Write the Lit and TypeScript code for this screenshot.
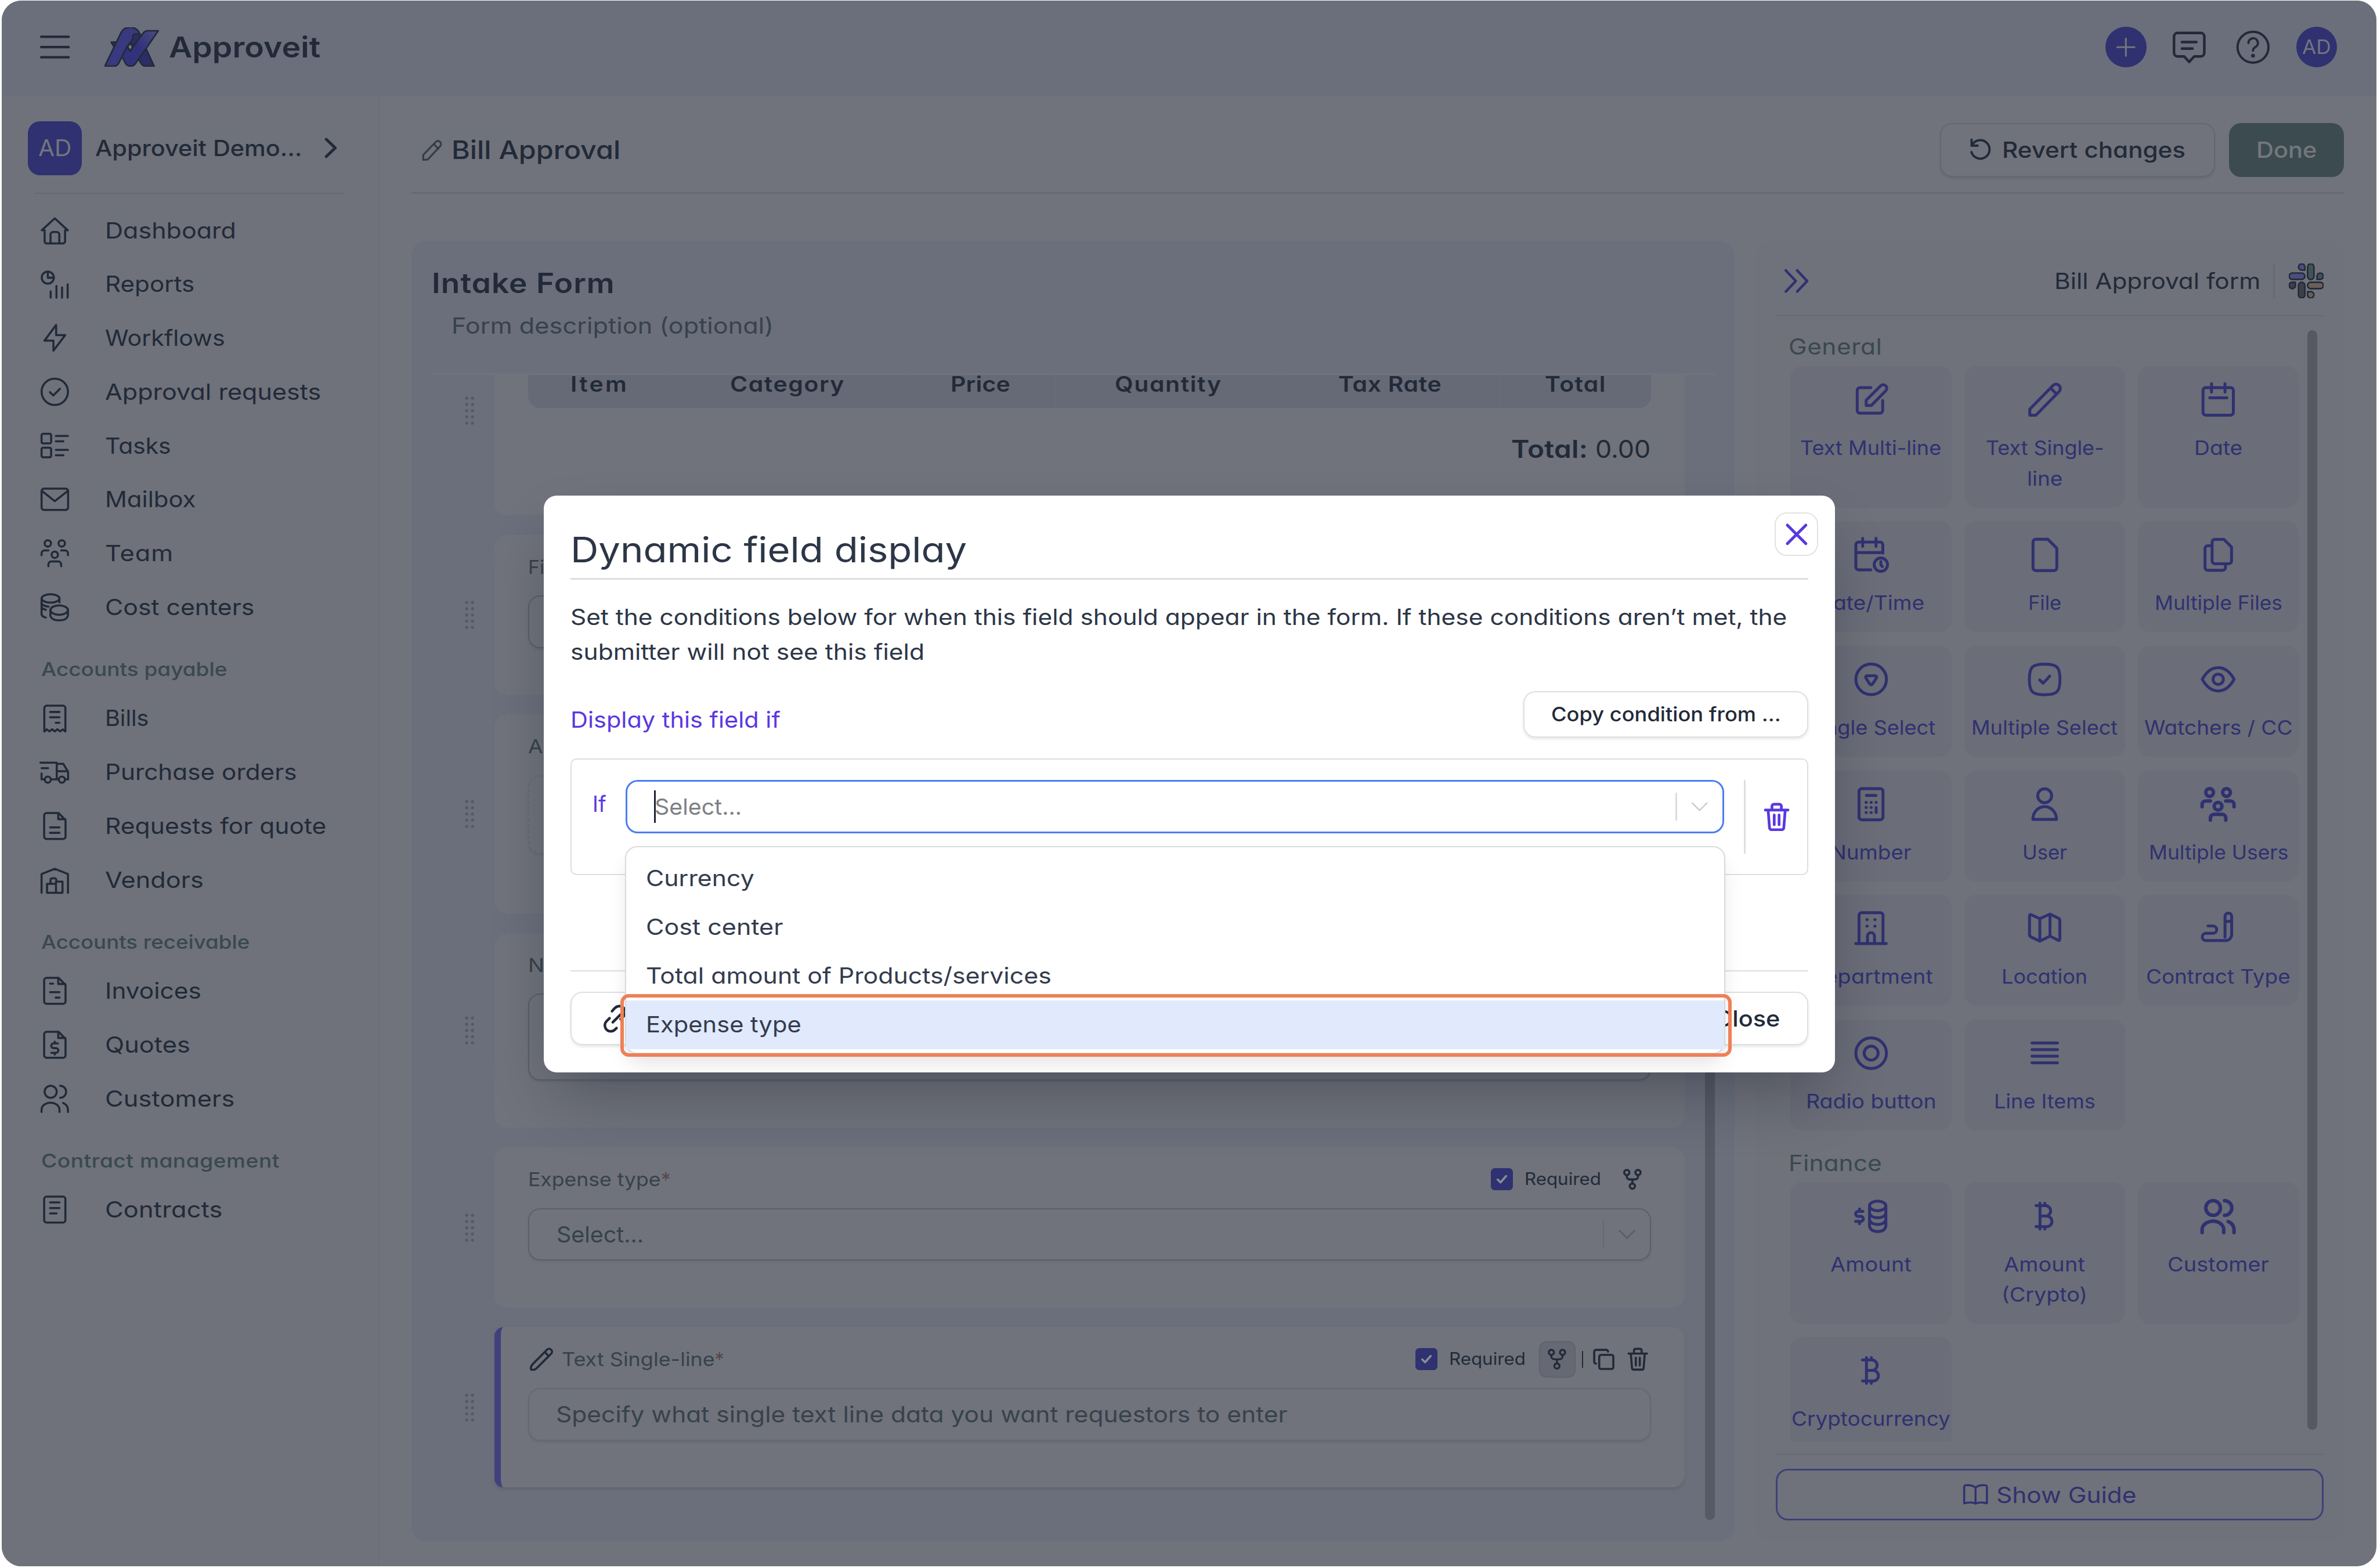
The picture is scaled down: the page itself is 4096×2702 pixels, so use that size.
import { LitElement, html, css, svg, nothing } from "lit";
import { customElement } from "lit/decorators.js";

const DESIGN_WIDTH = 1568;
const MAX_STRETCH = 1.12;

type Label = [text: string, width: number];

/** Text whose width and tracking are tuned so the words span the given width. */
const t = ([text, width]: Label, cls = "") =>
  html`<span class="t ${cls}" data-w=${width}>${text}</span>`;

const people = svg`<circle cx="5.5" cy="3.6" r="2.1"/><circle cx="14.7" cy="3.6" r="2.1"/><circle cx="10.1" cy="11.1" r="2.1"/><path d="M1.4 11.4V10.2a2 2 0 0 1 2-2h2.5M18.8 11.4V10.2a2 2 0 0 0-2-2h-2.5M5.9 18.7v-1.2a2 2 0 0 1 2-2h4.4a2 2 0 0 1 2 2v1.2"/>`;
const couple = svg`<circle cx="7.4" cy="5.5" r="4"/><path d="M1.4 18.9v-1.6a5.9 4.6 0 0 1 11.8 0v1.6M13.6 1.5a4 4 0 0 1 0 8M15.6 12.9q3.2 1.3 3.2 4.6v1.4"/>`;
const doc = svg`<path d="M3.1 3.1a1.6 1.6 0 0 1 1.6-1.6h7.9l4.6 4.7v10.9a1.6 1.6 0 0 1-1.6 1.6H4.7a1.6 1.6 0 0 1-1.6-1.6zM12.4 1.6v4h4.6"/>`;

const navIcons: Record<string, unknown> = {
  home: svg`<path d="M3.4 9.9H1.5L10.1 2l8.6 7.9h-1.8v7.2a1.5 1.5 0 0 1-1.5 1.5H4.9a1.5 1.5 0 0 1-1.5-1.5zM7.3 18.5v-5.7a1.8 1.8 0 0 1 1.8-1.8h2.2a1.8 1.8 0 0 1 1.8 1.8v5.7"/>`,
  reports: svg`<circle cx="5.5" cy="5.5" r="4"/><path d="M5.5 1.6v4h4M7.4 14.6v4.2M11.2 11v7.8M14.9 12v6.8M18.6 10v8.8"/>`,
  bolt: svg`<path d="M11 1.5L3.3 11.9h5.9v6.6L17 8.2h-6z"/>`,
  check: svg`<circle cx="10.1" cy="10" r="8.7"/><path d="M6.9 10.2l2.2 2.2 4.4-4.4"/>`,
  tasks: svg`<rect x="1.4" y="2.1" width="6.3" height="6.3" rx="1"/><rect x="1.4" y="11.3" width="6.3" height="6.3" rx="1"/><path d="M10.8 3.5h8M10.8 7.1h5M10.8 12.7h8M10.8 16.3h5"/>`,
  mail: svg`<rect x="1.4" y="3.1" width="17.5" height="14" rx="1.6"/><path d="M1.7 4.6l8.4 6.7 8.5-6.7"/>`,
  team: people,
  coins: svg`<ellipse cx="7.3" cy="4.3" rx="5.9" ry="2.8"/><path d="M1.4 4.3v10.6q.4 1.4 2.8 2M1.4 10q.4 1.2 2.8 1.8M13.2 4.3v2.6M1.4 7.5q1 2 4.6 2.2"/><ellipse cx="13" cy="12" rx="5.8" ry="3.1"/><path d="M7.2 12v3.8q1 3 5.8 3t5.8-3V12"/>`,
  bills: svg`<path d="M3.2 18.6V3.1a1.6 1.6 0 0 1 1.6-1.6h10.7a1.6 1.6 0 0 1 1.6 1.6v15.5l-1.7-1.4-1.8 1.3-1.8-1.4-1.7 1.4-1.7-1.4-1.8 1.4-1.8-1.3zM7 5.7h6.2M7 9.2h6.2M10.7 12.8h2.5"/>`,
  truck: svg`<path d="M.6 3.9h10.8v11M1.4 7.6h4.3M1.4 11v3.9h2M7.6 14.9h5M11.4 4.7h4.3l3.2 5.2v5h-2M11.4 9.6h7.3"/><circle cx="5.5" cy="15.1" r="2"/><circle cx="14.8" cy="15.1" r="2"/>`,
  request: svg`${doc}<path d="M7 11h6.2M7 14.6h6.2"/>`,
  vendor: svg`<path d="M1.4 18.6V6.2l8.7-3.5 8.7 3.5v12.4M5 12.6h5.9v6H5zM10.9 11.2h4.3v7.4h-4.3zM7.3 12.5V10a1 1 0 0 1 1-1h1.8a1 1 0 0 1 1 1v1.2"/>`,
  invoice: svg`${doc}<path d="M7 5.4h2M7 11h6.2M10.7 14.6h2.5"/>`,
  quote: svg`${doc}<path d="M12.2 9.2H9.3a1.5 1.5 0 0 0 0 3.1h1.6a1.5 1.5 0 0 1 0 3.1H7.8M10.1 8v1.2M10.1 15.4v1.2"/>`,
  customers: couple,
  contract: svg`<rect x="3.1" y="1.5" width="14" height="17.2" rx="1.6"/><path d="M7 5.4h6.2M7 9.1h6.2M7 12.6h4.3"/>`,
};

const btc = svg`<path d="M6.3 4.8h6.2a3.3 3.3 0 0 1 0 6.9H8.9M8.9 11.7h4.4a3.5 3.5 0 0 1 0 7H6.3M8.9 4.8v13.9M8.9 3.2v1.6M12.1 3.2v1.6M8.9 18.7v1.6M12.1 18.7v1.6"/>`;

const tileIcons: Record<string, unknown> = {
  edit: svg`<path d="M11.8 3.8H4.6A1.8 1.8 0 0 0 2.8 5.6v13.3a1.8 1.8 0 0 0 1.8 1.8h13.2a1.8 1.8 0 0 0 1.8-1.8v-6.6"/><path d="M8.7 15.6v-3.4L18.3 2.6a2.3 2.3 0 0 1 3.3 3.3l-9.5 9.7z"/>`,
  pencil: svg`<path d="M2.2 22v-4L17.5 2.4a2.8 2.8 0 0 1 4 4L6.2 22zM16 4.2l3.9 3.9"/>`,
  date: svg`<rect x="2" y="3.8" width="20" height="18.2" rx="1.8"/><path d="M7.6 1.2v5.6M16.5 1.2v5.6M6.4 10.5h11.4"/>`,
  datetime: svg`<path d="M11.8 21.8H3.7a1.8 1.8 0 0 1-1.8-1.8V5.3a1.8 1.8 0 0 1 1.8-1.8h14.2a1.8 1.8 0 0 1 1.8 1.8v5.5M1.9 10.4h17.8M6.4 1v5.4M15.2 1v5.4"/><circle cx="18.4" cy="18.4" r="4.4"/><path d="M18.4 16.4v2.2l1 1"/>`,
  file: svg`<path d="M4.3 3.4A1.8 1.8 0 0 1 6.1 1.6h8l5.9 6v12.9a1.8 1.8 0 0 1-1.8 1.8H6.1a1.8 1.8 0 0 1-1.8-1.8z"/>`,
  files: svg`<path d="M8 3.5a1.8 1.8 0 0 1 1.8-1.8h6l5 5.1V16a1.8 1.8 0 0 1-1.8 1.8H9.8A1.8 1.8 0 0 1 8 16zM7.8 5.9H5.1a1.8 1.8 0 0 0-1.8 1.8v12.6a1.8 1.8 0 0 0 1.8 1.8h9.9a1.8 1.8 0 0 0 1.8-1.8v-2"/>`,
  single: svg`<circle cx="12" cy="11.7" r="10.1"/><path d="M9.4 9.4h5.2q1.6.2.8 1.6l-2.5 3.8q-.9 1.1-1.8 0L8.6 11q-.8-1.4.8-1.6z"/>`,
  multi: svg`<path d="M12 1.7c8.2 0 10.1 1.9 10.1 10.1S20.200 21.900 12 21.900 1.900 20 1.900 11.800 3.800 1.700 12 1.700z"/><path d="M8.7 12.1l2.300 2.200 4.300-4.700"/>`,
  eye: svg`<path d="M1.500 11.700Q5.700 4 12 4t10.500 7.700Q18.300 19.400 12 19.400T1.500 11.700z"/><circle cx="12" cy="11.700" r="3.400"/>`,
  calc: svg`<rect x="4" y="1.500" width="15.800" height="20.600" rx="1.800"/><path d="M8.800 6h6.400M8.600 10.600h.2M11.900 10.600h.2M15.200 10.600h.2M8.600 14h.2M11.900 14h.2M8.600 17.300h.2M11.900 17.300h.2M15.300 14v3.300"/>`,
  user: svg`<circle cx="12" cy="6.200" r="4.600"/><path d="M4.200 21.800a7.800 8.400 0 0 1 15.600 0z"/>`,
  users: svg`<g transform="translate(-.3 -.3) scale(1.210)">${people}</g>`,
  building: svg`<path d="M4 21.700V3.200A1.800 1.800 0 0 1 5.800 1.400h12.200a1.800 1.800 0 0 1 1.800 1.800v18.500M1.800 21.800h20.200M9.600 21.500v-4.600a2.300 2.300 0 0 1 4.600 0v4.600M9.200 6h.2M14.400 6h.2M9.200 10.300h.2M14.400 10.300h.2"/>`,
  map: svg`<path d="M2 3.600q0-1.300 1.200-.7l5.600 2.500 6.700-3 5.400 2.600q1.100.5 1.100 1.700v12.200q0 1.200-1.100.7l-5.400-2.700-6.700 3.300-5.700-2.700Q2 17 2 15.800zM8.800 5.400v14.800M15.500 2.400v14.500"/>`,
  sign: svg`<path d="M16.500 17.600V3.900a2.200 2.200 0 0 1 4.400 0v11.900a4 4 0 0 1-4 4H3.900a2.200 2.200 0 0 1 0-4.800h4.700a2.400 2.400 0 0 0 0-4.800H5.300M16.600 7.200h4.200"/>`,
  radio: svg`<circle cx="12" cy="11.800" r="10.100"/><circle cx="12" cy="11.800" r="4.600"/>`,
  lines: svg`<path d="M3.600 5.100h16.900M3.600 9.500h16.900M3.600 13.800h16.900M3.600 18.200h16.900"/>`,
  amount: svg`<ellipse cx="16.300" cy="5" rx="5.400" ry="3.200"/><path d="M10.900 5v13.400q.9 3.500 5.400 3.500t5.400-3.500V5M10.900 9.800q.9 3 5.400 3t5.400-3M10.900 14.200q.9 3 5.400 3t5.400-3"/><path d="M6.600 8.600H3.400a1.600 1.600 0 0 0 0 3.300h1.800a1.600 1.600 0 0 1 0 3.300H1.700M4.300 7v1.600M4.300 15.200v1.600"/>`,
  btc,
  customer: svg`<g transform="translate(-.3 -.3) scale(1.210)">${couple}</g>`,
};

interface NavItem { icon: string; label: Label }
interface NavGroup { title?: Label; items: NavItem[] }

const nav: NavGroup[] = [
  { items: [
    { icon: "home", label: ["Dashboard", 85] },
    { icon: "reports", label: ["Reports", 57.6] },
    { icon: "bolt", label: ["Workflows", 77.6] },
    { icon: "check", label: ["Approval requests", 141] },
    { icon: "tasks", label: ["Tasks", 42] },
    { icon: "mail", label: ["Mailbox", 58.4] },
    { icon: "team", label: ["Team", 43.4] },
    { icon: "coins", label: ["Cost centers", 97] },
  ] },
  { title: ["Accounts payable", 121.2], items: [
    { icon: "bills", label: ["Bills", 27.4] },
    { icon: "truck", label: ["Purchase orders", 125] },
    { icon: "request", label: ["Requests for quote", 144.5] },
    { icon: "vendor", label: ["Vendors", 63.5] },
  ] },
  { title: ["Accounts receivable", 136], items: [
    { icon: "invoice", label: ["Invoices", 62] },
    { icon: "quote", label: ["Quotes", 54.7] },
    { icon: "customers", label: ["Customers", 84] },
  ] },
  { title: ["Contract management", 155.6], items: [
    { icon: "contract", label: ["Contracts", 76] },
  ] },
];

interface Tile { icon: string; lines: Label[] }

const general: Tile[] = [
  { icon: "edit", lines: [["Text Multi-line", 91.6]] },
  { icon: "pencil", lines: [["Text Single-", 76.4], ["line", 22]] },
  { icon: "date", lines: [["Date", 30.4]] },
  { icon: "datetime", lines: [["Date/Time", 69]] },
  { icon: "file", lines: [["File", 20.4]] },
  { icon: "files", lines: [["Multiple Files", 82.7]] },
  { icon: "single", lines: [["Single Select", 83.5]] },
  { icon: "multi", lines: [["Multiple Select", 95]] },
  { icon: "eye", lines: [["Watchers / CC", 96.3]] },
  { icon: "calc", lines: [["Number", 52]] },
  { icon: "user", lines: [["User", 28]] },
  { icon: "users", lines: [["Multiple Users", 90.5]] },
  { icon: "building", lines: [["Department", 80.4]] },
  { icon: "map", lines: [["Location", 55.2]] },
  { icon: "sign", lines: [["Contract Type", 93.7]] },
  { icon: "radio", lines: [["Radio button", 84.5]] },
  { icon: "lines", lines: [["Line Items", 65.4]] },
];
const finance: Tile[] = [
  { icon: "amount", lines: [["Amount", 52]] },
  { icon: "btc", lines: [["Amount", 52], ["(Crypto)", 55.2]] },
  { icon: "customer", lines: [["Customer", 65.4]] },
  { icon: "btc", lines: [["Cryptocurrency", 103.3]] },
];

const columns: Label[] = [
  ["Item", 35.6], ["Category", 73.7], ["Price", 37.8], ["Quantity", 68.6], ["Tax Rate", 66.5], ["Total", 38.5],
];

const options: Label[] = [
  ["Currency", 70], ["Cost center", 89], ["Total amount of Products/services", 266], ["Expense type", 101],
];

const fork = svg`<circle cx="4.300" cy="3.600" r="1.700"/><circle cx="11.700" cy="3.600" r="1.700"/><circle cx="8" cy="12.600" r="1.700"/><path d="M4.300 5.300v.9a2 2 0 0 0 2 2h3.400a2 2 0 0 0 2-2v-.9M8 8.200v2.700"/>`;
const trash = svg`<path d="M3.400 5.300l.9 11.400a1.300 1.300 0 0 0 1.300 1.200h6.800a1.300 1.300 0 0 0 1.300-1.200l.9-11.400M1.500 4.900h15M5.900 4.700V2.300A1.200 1.200 0 0 1 7.100 1.100h3.800a1.200 1.200 0 0 1 1.200 1.200v2.400M7.400 8.200v6.400M10.600 8.200v6.400"/>`;

@customElement("app-root")
export class AppRoot extends LitElement {
  static styles = css`
    :host { display: block; width: 100vw; height: 100vh; overflow: hidden; background: #fff;
      font-family: Inter, "Open Sans", sans-serif; font-feature-settings: "cv11" 1; }
    * { box-sizing: border-box; }
    svg { display: block; fill: none; stroke: currentColor; stroke-linecap: round; stroke-linejoin: round; flex: none; }
    .t { white-space: nowrap; display: inline-block; transform-origin: 0 50%; }
    .stage { zoom: 2.6122449; width: 1568px; height: 1034.36px; position: relative; color: #222a39;
      font-size: 14.8px; line-height: 20px; padding: .5px .3px 1px 1px; overflow: hidden; background: #fff; }
    .frame { height: 100%; border-radius: 13px; overflow: hidden; background: #70737b; display: flex; flex-direction: column; }

    .top { height: 62.5px; flex: none; background: #6b6f7b; display: flex; align-items: center; padding: 0 26px 1.400px 25px; }
    .logo { margin-left: 22px; }
    .brand { font-size: 19px; font-weight: 600; margin-left: 6.500px; }
    .tools { margin-left: auto; display: flex; align-items: center; }
    .round { width: 27px; height: 27px; border-radius: 50%; background: #2f3170; color: #72757e; display: grid; place-items: center; }
    .round.user { font-size: 13px; }
    .chat { margin-left: 16.300px; }
    .help { margin-left: 18px; margin-right: 16.500px; }

    .below { flex: 1; min-height: 0; display: flex; }
    .side { width: 249.500px; flex: none; background: #6f727a; border-right: 1px solid #6c6f79; padding-top: 17px; }
    .org { display: flex; align-items: center; height: 35.500px; padding-left: 17.400px; font-weight: 500; }
    .badge { width: 35.500px; height: 35.500px; border-radius: 8px; background: #2f3170; color: #72757e; display: grid; place-items: center; font-weight: 400; font-size: 15px; }
    .orgname { margin-left: 8.800px; width: 150.500px; }
    .rule { height: 1px; background: #666873; }
    .side .rule { margin: 11.500px 22.500px 6.200px 22px; }
    .item { display: flex; align-items: center; height: 35.500px; padding-left: 25px; gap: 23.200px; }
    .group { height: 37.850px; padding: 13.200px 0 0 26px; font-size: 12.700px; font-weight: 500; color: #3a4850; }

    .main { flex: 1; padding: 18px 21.500px 0 21px; display: flex; flex-direction: column; }
    .head { display: flex; align-items: center; height: 36px; }
    .head > svg { color: #333c48; margin-left: .5px; }
    .title { font-size: 17px; font-weight: 500; margin-left: 6px; }
    .btn { display: flex; align-items: center; justify-content: center; border-radius: 8px; border: 1px solid #646773; height: 35.300px; font-weight: 500; }
    .revert { margin-left: auto; width: 181.300px; gap: 6.500px; box-shadow: 0 1px 1px #686b75; padding-bottom: .6px; }
    .done { margin-left: 9px; width: 76px; background: #3b4b4f; border: 0; color: #74777f; padding-bottom: .6px; }
    .main > .rule { margin-top: 9.800px; flex: none; }
    .cols { display: flex; gap: 14px; margin-top: 31px; height: 858px; }

    .form { width: 872.600px; border-radius: 10px; background: #6b6f7b; position: relative; padding: 0 13px; overflow: hidden; }
    .form h2 { margin: 0 0 0 .3px; font-size: 18.200px; font-weight: 600; line-height: 24px; padding: 16px 0 0 0; }
    .desc { padding: 6px 0 0 13.500px; color: #37424b; }
    .desc + .rule { background: #70737b; margin-top: 21.300px; height: 1.200px; }
    .card { display: flex; margin-bottom: 13.100px; }
    .grip { width: 41.800px; display: flex; align-items: center; padding-left: 21.400px; color: #565965; }
    .body { width: 785px; border-radius: 8px; background: #70737b; padding: 11px 22.300px 0 22.200px; position: relative; }
    .c1 { height: 92.500px; } .c1 .body { border-top-left-radius: 0; border-top-right-radius: 0; padding-top: 0; }
    .c1 .grip { align-items: flex-start; padding-top: 13.300px; }
    .c2 { height: 105.400px; } .c3 { height: 131.300px; } .c4 { height: 128.100px; } .c5, .c6 { height: 105.600px; }
    .c6 .body { border-left: 4.300px solid #40417c; padding-left: 17.900px; box-shadow: 0 1.500px 2px #62656f; border-radius: 6px 8px 8px 6px; }
    .thead { display: grid; grid-template-columns: 93px 156px 99px 148px 145px 99px; height: 22px;
      background: #666a76; border-radius: 0 0 8px 8px; font-size: 14px; font-weight: 600; text-align: center; line-height: 12.400px; }
    .thead > div { border-right: .4px solid #696d78; height: 22px; }
    .thead > div:last-child { border: 0; }
    .total { text-align: right; font-size: 16.300px; margin-top: 17.100px; display: flex; justify-content: flex-end; gap: 5px; }
    .total b { font-weight: 600; }
    .label { display: flex; align-items: center; height: 20px; font-size: 12.700px; color: #37424b; }
    .label svg { color: #222a39; }
    .lbl { margin-left: 5px; }
    .star { color: #57474c; margin-left: 0; }
    .flags { margin-left: auto; display: flex; align-items: center; color: #222a39; font-size: 11.200px; }
    .forked { margin: 0 4px 0 13px; }
    .box { width: 14.500px; height: 14.500px; border-radius: 2.500px; background: #2f3170; color: #8a8d96; display: grid; place-items: center; margin-right: 7.500px; }
    .box svg { color: #8a8d96; }
    .chip { width: 24px; height: 24px; border-radius: 5px; border: 1px solid #5f626d; background: #666974; display: grid; place-items: center; margin: 0 4.300px 0 9px; }
    .bar { width: 1px; height: 11px; background: #222a39; margin-right: 6px; }
    .del { margin: 0 1px 0 7px; }
    .input { height: 34.800px; border: 1px solid #5c5e6c; border-radius: 8px; margin-top: 8.900px; display: flex; align-items: center; padding: 0 9px 0 17.700px;
      color: #37424b; box-shadow: 0 1px 1px #696c75; }
    .input svg { color: #5a5d69; }
    .c6 .input { border-color: #656874; }
    .input .split { margin-left: auto; width: 1px; height: 19px; background: #676a75; margin-right: 9px; }
    .tall { height: 57.400px; margin-top: 8.800px; }
    .drop { height: 52px; border-style: dashed; border-color: #686b76; }
    .scroll { position: absolute; left: 853.400px; top: 300px; width: 6.400px; height: 544px; border-radius: 3px; background: #575a65; }

    .panel { width: 388px; border-radius: 10px; background: #6f727a; padding: 15px 13.200px 0; display: flex; flex-direction: column; }
    .phead { display: flex; align-items: center; height: 23px; padding-left: 4.600px; }
    .phead .pt { margin-left: auto; }
    .phead .vr { width: 1px; height: 23px; background: #676a74; margin: 0 9.300px 0 8.300px; }
    .panel > .rule { margin-top: 11px; flex: none; }
    .list { height: 742px; flex: none; overflow: hidden; padding: 9.600px 0 0 9.800px; position: relative; }
    .sec { color: #3a4850; font-size: 14.500px; height: 23.300px; line-height: 21px; margin-left: -1.200px; }
    .tiles { display: grid; grid-template-columns: repeat(3, 106.200px); column-gap: 8.400px; row-gap: 9px; margin-bottom: 10.900px; }
    .tile { background: #6b6d78; border-radius: 8px; min-height: 73.100px; padding: 10.400px 0 9.100px; display: flex; flex-direction: column; align-items: center; color: #2f3170; font-size: 12.900px; }
    .tile svg { stroke-width: 1.900; margin-bottom: 9.700px; }
    .tile .t { line-height: 20px; height: 20px; }
    .thumb { position: absolute; left: 350.700px; top: 9px; width: 6.500px; height: 725.500px; border-radius: 3.300px; background: #565963; }
    .panel > .foot-rule { margin-top: 8px; }
    .guide { margin-top: 9.300px; height: 34px; border: 1.300px solid #3f407c; border-radius: 8px; display: flex; align-items: center; justify-content: center; gap: 5px; color: #2f3170; flex: none; }

    .modal { position: absolute; left: 358.700px; top: 327px; width: 851.800px; height: 380.400px; border-radius: 8.500px; background: #fff; color: #2c3646;
      padding: 0 17.700px; box-shadow: 0 20px 40px -9px rgba(10, 12, 30, .32); }
    .mh { display: flex; align-items: center; height: 54.300px; padding-top: 17px; font-size: 23px; }
    .mh .t { line-height: 30px; }
    .x { margin: -20.400px -6.500px 0 auto; width: 28.500px; height: 28.500px; border: 1px solid #e2e2e4; border-radius: 8px; display: grid; place-items: center; color: #5a38e0; }
    .modal .rule { background: #dedede; }
    .text { margin-top: 13.200px; line-height: 23px; font-size: 14.700px; display: flex; flex-direction: column; align-items: flex-start; }
    .cond { display: flex; align-items: center; margin-top: 14.400px; height: 30.500px; color: #5a38e0; }
    .cond .t { margin-top: 7px; }
    .copy { margin-left: auto; width: 187.800px; height: 30.500px; border-color: #dfdfe1; color: #222a39; font-size: 12.800px; box-shadow: 0 1px 2px #e8e8e8; }
    .cond .copy .t { margin-top: 0; }
    .ifbox { margin-top: 14px; height: 77px; border: 1px solid #dfdfe1; border-radius: 4px; display: flex; padding: 13.500px 8px 0 13.700px; }
    .if { color: #5a38e0; width: 22px; height: 32px; line-height: 32px; flex: none; }
    .sel { width: 724.300px; flex: none; height: 34.900px; border: 1.200px solid #4a7df0; border-radius: 8px; display: flex; align-items: center; padding: 0 8.800px 0 17.600px; color: #7f8085; }
    .caret { width: 1.100px; height: 21.500px; background: #1f2636; margin-right: -.8px; }
    .sel .split { margin-left: auto; width: 1px; height: 18.500px; background: #dcdcdf; margin-right: 9px; }
    .sel svg { color: #cdcdd2; }
    .ifbox .vr { width: 1px; height: 48.500px; background: #dfdfe1; margin-left: 13.300px; }
    .ifbox > svg { margin: 14.800px 0 0 11.400px; color: #5a38e0; }
    .modal > .rule.low { margin-top: 62.600px; }
    .foot { display: flex; justify-content: space-between; margin-top: 13.300px; }
    .foot .btn { border-color: #dfdfe1; color: #222a39; box-shadow: 0 1px 2px #e8e8e8; }
    .foot .l { width: 120px; justify-content: flex-start; padding-left: 19px; }
    .foot .r { width: 80px; justify-content: flex-end; padding-right: 18px; }

    .menu { position: absolute; left: 412.400px; top: 558px; width: 725.700px; height: 137px; border: .800px solid #d9d9de; border-radius: 8px; background: #fff; padding-top: 4.700px;
      box-shadow: 0 8px 14px -3px rgba(0, 0, 0, .12), 0 2px 4px -2px rgba(0, 0, 0, .06); color: #333c4e; }
    .opt { height: 32.150px; line-height: 32.150px; padding-left: 12.900px; }
    .opt.on { background: #e1e9fc; }
    .mark { position: absolute; left: 409.200px; top: 655.600px; width: 733.200px; height: 41.600px; border: 2.300px solid #ee8056; border-radius: 5.500px; }
  `;

  /** Widens each label up to MAX_STRETCH and spreads what is left as tracking. */
  private fit() {
    const root = this.renderRoot as ShadowRoot;
    const stage = root.querySelector(".stage") as HTMLElement;
    const scale = stage.getBoundingClientRect().width / DESIGN_WIDTH;
    const range = document.createRange();
    root.querySelectorAll<HTMLElement>("[data-w]").forEach((el) => {
      range.selectNodeContents(el);
      const natural = range.getBoundingClientRect().width / scale;
      const target = Number(el.dataset.w) + 1.5;
      const stretch = Math.max(0.94, Math.min(MAX_STRETCH, target / natural));
      const count = Math.max(1, (el.textContent ?? "").length - 1);
      const gap = (target / stretch - natural) / count;
      const laidOut = natural + gap * (count + 1);
      el.style.letterSpacing = `${gap.toFixed(3)}px`;
      el.style.transform = `scaleX(${stretch.toFixed(4)})`;
      el.style.marginRight = `${(target - laidOut).toFixed(3)}px`;
    });
  }

  firstUpdated() {
    this.fit();
  }

  private grip() {
    const rows = [2, 6.100, 10.200, 14.300, 18.400];
    return html`<div class="grip"><svg width="8" height="20.400" viewBox="0 0 8 20.400">
      ${rows.map((y) => svg`<circle cx="2" cy=${y} r="1" fill="currentColor" stroke="none"/><circle cx="5.800" cy=${y} r="1" fill="currentColor" stroke="none"/>`)}
    </svg></div>`;
  }

  private check() {
    return html`<span class="box"><svg width="10" height="10" viewBox="0 0 10 10" stroke-width="1.400"><path d="M2.200 5.200l1.900 1.900 3.700-4.200"/></svg></span>`;
  }

  private chevron() {
    return html`<svg width="12" height="8" viewBox="0 0 12 8" stroke-width="1"><path d="M1.200 1.500L6 6.300l4.800-4.800"/></svg>`;
  }

  private tile(item: Tile) {
    return html`<div class="tile">
      <svg width="24" height="24" viewBox="0 0 24 24">${tileIcons[item.icon]}</svg>
      ${item.lines.map((l) => t(l))}
    </div>`;
  }

  render() {
    return html`<div class="stage">
      <div class="frame">
        <header class="top">
          <svg width="21" height="16" viewBox="0 0 21 16" stroke-width="1.700"><path d="M1.200 1.300h18M1.200 8.100h18M1.200 14.800h18"/></svg>
          <svg class="logo" width="36" height="26" viewBox="0 0 36 26" stroke="none">
            <defs>
              <linearGradient id="k" x1="0" y1="1" x2="1" y2="0"><stop offset=".5" stop-color="#31337a"/><stop offset="1" stop-color="#4b4a80"/></linearGradient>
            </defs>
            <path fill="#2b2d60" d="M4.400 9.800h5l-2 5z"/>
            <path fill="#2b2d64" d="M27.200 13.600l5.600 12.100h-5.300q-2.300 0-3.400-1.900l-2.900-4.800z"/>
            <path fill="#38397e" d="M.2 25.700L11.100 3.200Q13 0 17 0q4 0 6 3.600l1.500 2.700-5.500 6.500-2.100-2.600-1.900 2.600L11.600 19.400 9.500 23.500q-1.200 2.200-3.400 2.200z"/>
            <path fill="#2b2d60" d="M18.700 5.300q2.100-1.700 4.900-.4l1.200 2-5.900 6-2-2.700q2.300-2.200 1.800-4.900z"/>
            <path fill="url(#k)" d="M35.500 2.300h-7q-1.700 0-2.700 1.300L18.900 12.800 16.900 15.900 15 12.800 11.600 19.400l2.400 4.600q1.100 1.700 3.200 1.700t3.200-1.700l7.100-10z"/>
            <path fill="#7b7e8a" d="M16.900 10.600l1.700 2.300-1.700 2.600-1.600-2.600z"/>
          </svg>
          ${t(["Approveit", 98.500], "brand")}
          <div class="tools">
            <div class="round"><svg width="14" height="14" viewBox="0 0 14 14" stroke-width="1.200"><path d="M7 1.300v11.400M1.300 7h11.400"/></svg></div>
            <svg class="chat" width="24" height="24" viewBox="0 0 24 24" stroke-width="1.700"><path d="M4.400 2.600h15.200A2.400 2.400 0 0 1 22 5v10.700a2.400 2.400 0 0 1-2.400 2.400h-4.300L12 21.700l-3.300-3.600H4.400A2.400 2.400 0 0 1 2 15.700V5a2.400 2.400 0 0 1 2.400-2.400zM7.200 8.600h9.600M7.200 12.900h7"/></svg>
            <svg class="help" width="24" height="24" viewBox="0 0 24 24" stroke-width="1.500"><circle cx="12" cy="12" r="10.200"/><path d="M9 9.200a3.100 3.100 0 1 1 4.400 2.800q-1.400.8-1.400 2.300"/><circle cx="12" cy="17.600" r=".5" fill="currentColor"/></svg>
            <div class="round user">${t(["AD", 17.500])}</div>
          </div>
        </header>
        <div class="below">
          <nav class="side">
            <div class="org">
              <div class="badge">${t(["AD", 20.500])}</div>
              <div class="orgname">${t(["Approveit Demo…", 135])}</div>
              <svg width="10" height="16" viewBox="0 0 10 16" stroke-width="1.900"><path d="M2 2.300L7.900 8 2 13.700"/></svg>
            </div>
            <div class="rule"></div>
            ${nav.map((g) => html`
              ${g.title ? html`<div class="group">${t(g.title)}</div>` : nothing}
              ${g.items.map((i) => html`<div class="item">
                <svg width="20" height="20" viewBox="0 0 20 20" stroke-width="1.350">${navIcons[i.icon]}</svg>${t(i.label)}
              </div>`)}`)}
          </nav>
          <main class="main">
            <div class="head">
              <svg width="20" height="16" viewBox="0 0 20 16" stroke-width="1.200"><path d="M7 14.300v-3.200L15.300 2.500a1.900 1.900 0 0 1 3 .2 1.900 1.900 0 0 1-.1 2.600L10 14.100zM14 4l3 3"/></svg>
              ${t(["Bill Approval", 110], "title")}
              <div class="btn revert">
                <svg width="15" height="15" viewBox="0 0 15 15" stroke-width="1.500"><path d="M1.300 1v4h4M1.500 4.900a6.100 6.100 0 1 1-.3 4.300"/></svg>
                ${t(["Revert changes", 119.500])}
              </div>
              <div class="btn done">${t(["Done", 38.500])}</div>
            </div>
            <div class="rule"></div>
            <div class="cols">
              <section class="form">
                <h2>${t(["Intake Form", 119])}</h2>
                <div class="desc">${t(["Form description (optional)", 211])}</div>
                <div class="rule"></div>
                <div class="card c1">${this.grip()}
                  <div class="body">
                    <div class="thead">${columns.map((c) => html`<div>${t(c)}</div>`)}</div>
                    <div class="total"><b>${t(["Total:", 49])}</b>${t(["0.00", 35])}</div>
                  </div>
                </div>
                <div class="card c2">${this.grip()}
                  <div class="body"><div class="label">${t(["File", 20])}</div><div class="input"></div></div>
                </div>
                <div class="card c3">${this.grip()}
                  <div class="body"><div class="label">${t(["Accounts", 62])}</div><div class="input drop"></div></div>
                </div>
                <div class="card c4">${this.grip()}
                  <div class="body"><div class="label">${t(["Notes", 38])}</div><div class="input tall"></div></div>
                </div>
                <div class="card c5">${this.grip()}
                  <div class="body">
                    <div class="label">${t(["Expense type", 86])}<span class="star">*</span>
                      <div class="flags">${this.check()}${t(["Required", 49])}
                        <svg class="forked" width="16" height="16" viewBox="0 0 16 16" stroke-width="1.400">${fork}</svg></div>
                    </div>
                    <div class="input">${t(["Select...", 56])}<i class="split"></i>${this.chevron()}</div>
                  </div>
                </div>
                <div class="card c6">${this.grip()}
                  <div class="body">
                    <div class="label">
                      <svg width="17" height="17" viewBox="0 0 17 17" stroke-width="1.400"><path d="M2 15.300q-.6-1.500.8-3.300L12.500 2.200a1.900 1.900 0 0 1 2.700 2.700L5.400 14.700q-1.500 1.200-3.400.6zM11 3.800l2.700 2.700"/></svg>
                      <span class="lbl">${t(["Text Single-line", 99.500])}</span><span class="star">*</span>
                      <div class="flags">${this.check()}${t(["Required", 49])}
                        <span class="chip"><svg width="16" height="16" viewBox="0 0 16 16" stroke-width="1.300">${fork}</svg></span>
                        <i class="bar"></i>
                        <svg width="15" height="15" viewBox="0 0 15 15" stroke-width="1.400"><rect x="4.500" y="4.500" width="9.300" height="9.300" rx="1.200"/><path d="M2.400 10.300a1.200 1.200 0 0 1-1.200-1.200V2.400a1.200 1.200 0 0 1 1.200-1.200h6.700a1.200 1.200 0 0 1 1.200 1.200"/></svg>
                        <svg class="del" width="15.500" height="15.500" viewBox="0 0 18 19" stroke-width="1.700">${trash}</svg>
                      </div>
                    </div>
                    <div class="input">${t(["Specify what single text line data you want requestors to enter", 481])}</div>
                  </div>
                </div>
                <div class="scroll"></div>
              </section>
              <aside class="panel">
                <div class="phead">
                  <svg width="18" height="17" viewBox="0 0 18 17" stroke-width="1.700" color="#2f3170"><path d="M2 1.500l6.600 7L2 15.500M9.500 1.500l6.600 7-6.600 7"/></svg>
                  ${t(["Bill Approval form", 134.500], "pt")}
                  <i class="vr"></i>
                  <svg width="23" height="23" viewBox="0 0 23 23" stroke="none">
                    <path fill="#4c4d7e" d="M8.500 .2a2.100 2.100 0 0 1 2.100 2.100v2.100H8.500a2.100 2.100 0 0 1 0-4.200zM2.300 6.300h6.200a2.100 2.100 0 0 1 0 4.200H2.300a2.100 2.100 0 0 1 0-4.200z"/>
                    <path fill="#415357" d="M14.500 .2a2.100 2.100 0 0 1 2.100 2.100v6.200a2.100 2.100 0 0 1-4.200 0V2.300A2.100 2.100 0 0 1 14.500 .2zM20.700 6.300a2.100 2.100 0 0 1 0 4.200h-2.100V8.400a2.100 2.100 0 0 1 2.100-2.100z"/>
                    <path fill="#3d404b" d="M.2 14.500a2.100 2.100 0 0 1 2.100-2.100h2.100v2.100a2.100 2.100 0 0 1-4.200 0zM8.500 12.400a2.100 2.100 0 0 1 2.100 2.100v6.200a2.100 2.100 0 0 1-4.200 0v-6.200a2.100 2.100 0 0 1 2.100-2.100z"/>
                    <path fill="#6b5f58" d="M14.500 12.400h6.200a2.100 2.100 0 0 1 0 4.200h-6.200a2.100 2.100 0 0 1 0-4.200zM12.400 18.600h2.100a2.100 2.100 0 1 1-2.100 2.100z"/>
                  </svg>
                </div>
                <div class="rule"></div>
                <div class="list">
                  <div class="sec">${t(["General", 60])}</div>
                  <div class="tiles">${general.map((x) => this.tile(x))}</div>
                  <div class="sec">${t(["Finance", 60])}</div>
                  <div class="tiles">${finance.map((x) => this.tile(x))}</div>
                  <div class="thumb"></div>
                </div>
                <div class="rule foot-rule"></div>
                <div class="guide">
                  <svg width="17" height="15" viewBox="0 0 17 15" stroke-width="1.300"><path d="M8.500 3v10.300M1 13.200V2.500q0-1.200 1.200-1.200 4.600-.300 6.300 1.700 1.700-2 6.300-1.700Q16 1.300 16 2.500v10.700q-5.500-1.200-7.500.3-2-1.500-7.500-.3z"/></svg>
                  ${t(["Show Guide", 91])}
                </div>
              </aside>
            </div>
          </main>
        </div>
      </div>

      <div class="modal">
        <div class="mh">${t(["Dynamic field display", 260])}
          <div class="x"><svg width="16" height="16" viewBox="0 0 16 16" stroke-width="1.900"><path d="M1.900 1.900l12.200 12.200M14.100 1.900L1.900 14.100"/></svg></div>
        </div>
        <div class="rule"></div>
        <div class="text">
          ${t(["Set the conditions below for when this field should appear in the form. If these conditions aren’t met, the", 801])}
          ${t(["submitter will not see this field", 232])}
        </div>
        <div class="cond">${t(["Display this field if", 137])}
          <div class="btn copy">${t(["Copy condition from ...", 150])}</div>
        </div>
        <div class="ifbox">
          <div class="if">${t(["If", 7.500])}</div>
          <div class="sel"><i class="caret"></i>${t(["Select...", 56])}<i class="split"></i>${this.chevron()}</div>
          <i class="vr"></i>
          <svg width="18" height="19" viewBox="0 0 18 19" stroke-width="1.800">${trash}</svg>
        </div>
        <div class="rule low"></div>
        <div class="foot">
          <div class="btn l"><svg width="20" height="20" viewBox="0 0 20 20" stroke-width="1.700"><path d="M8 12.500l5-5M7.500 5.200l2-2.200a3.900 3.900 0 0 1 5.700 5.500l-2 2M10.500 16.300l-1 1a3.900 3.900 0 0 1-5.600-5.500l2-2"/></svg></div>
          <div class="btn r">${t(["Close", 41.500])}</div>
        </div>
      </div>

      <div class="menu">${options.map((o, i) => html`<div class="opt ${i === 3 ? "on" : ""}">${t(o)}</div>`)}</div>
      <div class="mark"></div>
    </div>`;
  }
}
